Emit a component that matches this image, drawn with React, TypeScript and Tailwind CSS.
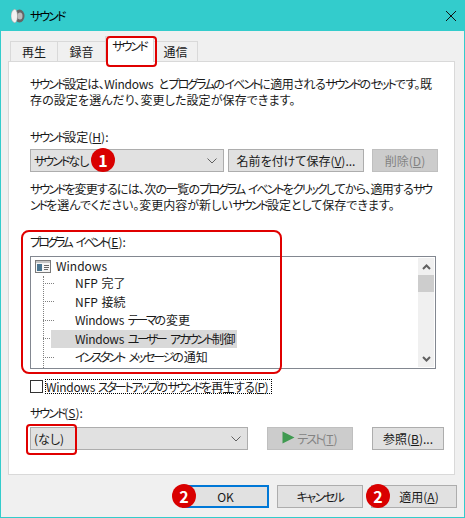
import React from "react";

const K = ({ children }: { children: React.ReactNode }) => <span className="tracking-[-2px]">{children}</span>;
const K2 = ({ children }: { children: React.ReactNode }) => <span className="tracking-[-2.2px] [word-spacing:4px]">{children}</span>;
const L = ({ children }: { children: React.ReactNode }) => <span className="tracking-[-0.3px]">{children}</span>;

const Tab = ({ children, w, active }: { children: React.ReactNode; w: string; active?: boolean }) => (
  <div className={`${w} ${active ? "h-[26px] bg-white border-[#d9d9d9] -mb-px z-10 relative" : "h-[20px] bg-[#f0f0f0] border-[#d9d9d9]"} border border-b-0 -mr-px flex items-start justify-center pt-[2px] text-[12px] leading-[16px]`}>
    {children}
  </div>
);

const U = ({ children }: { children: React.ReactNode }) => <span className="underline underline-offset-1">{children}</span>;

const Chevron = () => (
  <svg width="10" height="6" viewBox="0 0 10 6" className="shrink-0">
    <path d="M0.5 0.5 L5 5 L9.5 0.5" fill="none" stroke="#606060" strokeWidth="1" />
  </svg>
);

const Combo = ({ w, children }: { w: string; children: React.ReactNode }) => (
  <div className={`${w} h-[23px] bg-[#e1e1e1] border border-[#adadad] flex items-center justify-between pl-[3px] pr-[6px] text-[12px]`}>
    <span>{children}</span>
    <Chevron />
  </div>
);

const Btn = ({ w, children, disabled, blue, h = "h-[23px]" }: { w: string; children: React.ReactNode; disabled?: boolean; blue?: boolean; h?: string }) => (
  <div className={`${w} ${h} flex items-center justify-center text-[12px] ${disabled ? "bg-[#cccccc] border border-[#bfbfbf] text-[#838383]" : blue ? "bg-[#e1e1e1] border-2 border-[#0078d7]" : "bg-[#e1e1e1] border border-[#adadad]"}`}>
    {children}
  </div>
);

const Badge = ({ n, className }: { n: string; className: string }) => (
  <div className={`absolute w-[24px] h-[24px] rounded-full bg-[#d90000] text-white font-bold text-[16px] flex items-center justify-center z-30 ${className}`}>{n}</div>
);

const RedBox = ({ className }: { className: string }) => (
  <div className={`absolute border-2 border-[#e00000] pointer-events-none z-20 ${className}`} />
);

const Row = ({ children, selected }: { children: React.ReactNode; selected?: boolean }) => (
  <div className="h-[18.5px] flex items-center relative [word-spacing:1px]">
    <div className="w-[11px] h-0 border-t border-dotted border-[#808080] ml-[12px] shrink-0" />
    <div className={`h-[18px] flex items-center ml-[-3px] pl-[24px] whitespace-nowrap ${selected ? "bg-[#d9d9d9] w-[186px]" : ""}`}>
      <span>{children}</span>
    </div>
  </div>
);

export default function App() {
  return (
    <div className="w-[465px] h-[518px] bg-[#f0f0f0] border-x border-b border-[#33cccc] relative overflow-hidden text-[#1a1a1a] font-['Noto_Sans_CJK_JP','Liberation_Sans',sans-serif] [font-feature-settings:'palt'] [word-spacing:3px] leading-[16px] text-[12px]">
      {/* title bar */}
      <div className="h-[31px] -mx-px bg-[#33cccc] flex items-center pl-[11px] pr-[8px]">
        <svg width="14" height="16" viewBox="0 0 14 16">
          <ellipse cx="8.5" cy="8" rx="5" ry="6.5" fill="#666" />
          <ellipse cx="9" cy="8" rx="2.5" ry="3.5" fill="#bbb" />
          <path d="M4 1 C1 2 0 5 0 8 C0 11 1 14 4 15 C6 13 6.5 11 6.5 8 C6.5 5 6 3 4 1 Z" fill="#f2f2f2" stroke="#999" strokeWidth="0.5" />
        </svg>
        <span className="ml-[5px] text-[12px] text-black"><K>サウンド</K></span>
        <div className="flex-1" />
        <svg width="10" height="10" viewBox="0 0 10 10" className="mr-[1px]">
          <path d="M0 0 L10 10 M10 0 L0 10" stroke="#111" strokeWidth="1" />
        </svg>
      </div>

      {/* tabs */}
      <div className="pl-[9px] pt-[10px] flex items-end h-[30px]">
        <Tab w="w-[48px]">再生</Tab>
        <Tab w="w-[49px]">録音</Tab>
        <Tab w="w-[49px]" active><span className="-mt-[1px]"><K>サウンド</K></span></Tab>
        <Tab w="w-[45px]">通信</Tab>
      </div>

      {/* panel */}
      <div className="ml-[7px] w-[447px] h-[414px] bg-white border border-[#d9d9d9] pl-[21px] pt-[14px]">
        <div className="whitespace-nowrap leading-[16px]">
          <div className="tracking-[-0.5px]"><K>サウンド</K>設定は、<L>Windows</L> と<K>プログラム</K>の<K>イベント</K>に適用される<K>サウンド</K>の<K>セット</K>です。既</div>
          <div className="tracking-[0.1px]">存の設定を選んだり、変更した設定が保存できます。</div>
        </div>

        <div className="mt-[21px]"><K>サウンド</K>設定(<U>H</U>):</div>
        <div className="flex mt-[4px] items-start">
          <Combo w="w-[194px]"><K>サウンド</K><span className="tracking-[-1px]">なし</span></Combo>
          <Btn w="w-[136px] ml-[4px]">名前を付けて保存(<U>V</U>)...</Btn>
          <Btn w="w-[66px] ml-[8px]" disabled>削除(<U>D</U>)</Btn>
        </div>

        <div className="mt-[9px] whitespace-nowrap">
          <div className="tracking-[-0.8px]"><K>サウンド</K>を変更するには、次の一覧の<K>プログラム イベント</K>を<K>クリック</K>してから、適用する<K>サウ</K></div>
          <div><K>ンド</K>を選んでください。変更内容が新しい<K>サウンド</K>設定として保存できます。</div>
        </div>

        <div className="mt-[21px]"><span className="tracking-[-2.8px] [word-spacing:5px]">プログラム イベント</span>(<U>E</U>):</div>
        <div className="mt-[6px] w-[406px] h-[113px] border border-[#828790] bg-white flex overflow-hidden">
          <div className="flex-1 relative pt-[1px]">
            <div className="flex items-center h-[16px] pl-[4px]">
              <svg width="16" height="13" viewBox="0 0 16 13" className="shrink-0">
                <rect x="0.5" y="0.5" width="15" height="12" fill="#f6f6f6" stroke="#7a7a7a" />
                <rect x="1" y="1" width="14" height="2" fill="#c4c4c4" />
                <rect x="2" y="4" width="5" height="7" fill="#4a7590" />
                <path d="M9 5.5h5M9 7.5h5M9 9.5h4" stroke="#666" strokeWidth="1" />
              </svg>
              <span className="ml-[5px]">Windows</span>
            </div>
            <div className="absolute left-[12px] top-[19px] bottom-0 w-0 border-l border-dotted border-[#808080]" />
            <Row>NFP 完了</Row>
            <Row>NFP 接続</Row>
            <Row><L>Windows</L> <K2>テーマ</K2>の変更</Row>
            <Row selected><L>Windows</L> <K2>ユーザー アカウント</K2><span className="tracking-[-0.5px]">制御</span></Row>
            <Row><K2>インスタント メッセージ</K2>の通知</Row>
          </div>
          <div className="w-[16px] my-[1px] mr-[1px] bg-[#f0f0f0] flex flex-col items-center">
            <div className="h-[17px] flex items-center justify-center">
              <svg width="9" height="6" viewBox="0 0 9 6"><path d="M1 5 L4.5 1.5 L8 5" fill="none" stroke="#606060" strokeWidth="2" /></svg>
            </div>
            <div className="w-full h-[17px] bg-[#cdcdcd]" />
            <div className="flex-1" />
            <div className="h-[17px] flex items-center justify-center">
              <svg width="9" height="6" viewBox="0 0 9 6"><path d="M1 1 L4.5 4.5 L8 1" fill="none" stroke="#606060" strokeWidth="2" /></svg>
            </div>
          </div>
        </div>

        <div className="mt-[10px] flex items-center h-[15px]">
          <div className="w-[13px] h-[13px] border border-[#333] bg-white shrink-0" />
          <div className="ml-[2px] w-[227px] h-[15px] border border-dotted border-black whitespace-nowrap leading-[13px] tracking-[-0.7px] [word-spacing:1px]"><L>Windows</L> <K2>スタートアップ</K2>の<K2>サウンド</K2>を再生する(<U>P</U>)</div>
        </div>

        <div className="mt-[11px]"><K>サウンド</K>(<U>S</U>):</div>
        <div className="flex mt-[6px] items-start">
          <Combo w="w-[218px]">(なし)</Combo>
          <Btn w="w-[86px] ml-[19px]" disabled>
            <svg width="13" height="13" viewBox="0 0 13 13" className="mr-[2px] -mt-[2px]"><path d="M0.5 0.5 L12.5 6.5 L0.5 12.5 Z" fill="#3f9a50" /></svg>
            <K>テスト</K>(<U>T</U>)
          </Btn>
          <Btn w="w-[72px] ml-[19px]">参照(<U>B</U>)...</Btn>
        </div>
      </div>

      {/* footer buttons */}
      <div className="flex justify-end pr-[7px] pt-[10px] gap-[8px]">
        <Btn w="w-[87px]" blue>OK</Btn>
        <Btn w="w-[86px]"><span className="tracking-[-1.5px]">キャンセル</span></Btn>
        <Btn w="w-[86px]"><span className="ml-[10px]">適用(<U>A</U>)</span></Btn>
      </div>

      {/* callouts */}
      <RedBox className="left-[105px] top-[36px] w-[51px] h-[31px] rounded-[4px]" />
      <RedBox className="left-[20px] top-[230px] w-[261px] h-[144px] rounded-[8px]" />
      <RedBox className="left-[25px] top-[424px] w-[51px] h-[31px] rounded-[4px]" />
      <Badge n="1" className="left-[90px] top-[148px]" />
      <Badge n="2" className="left-[171px] top-[484px]" />
      <Badge n="2" className="left-[365px] top-[484px]" />
    </div>
  );
}
